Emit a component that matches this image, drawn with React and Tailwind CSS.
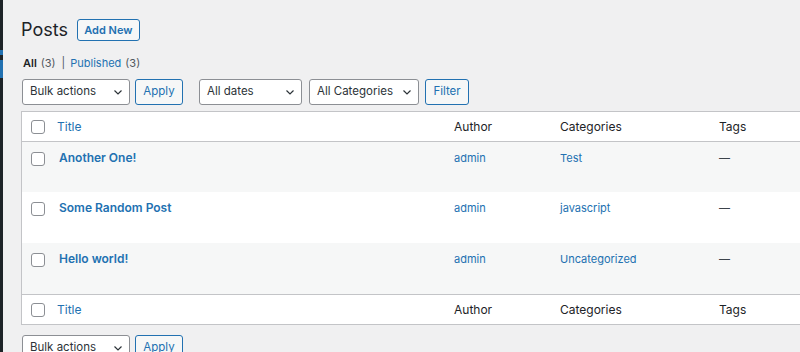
import React from 'react';

const posts = [
  { title: 'Another One!', author: 'admin', category: 'Test', alt: true, h: 'h-[50px]' },
  { title: 'Some Random Post', author: 'admin', category: 'javascript', alt: false, h: 'h-[51px]' },
  { title: 'Hello world!', author: 'admin', category: 'Uncategorized', alt: true, h: 'h-[51px]' },
];

const Checkbox = () => (
  <span className="block w-[14px] h-[14px] rounded-[3px] border border-[#8c8f94] bg-white" />
);

const Chevron = () => (
  <svg width="10" height="10" viewBox="0 0 10 10" fill="none" className="shrink-0">
    <path d="M1.5 3.5L5 7l3.5-3.5" stroke="#2c3338" strokeWidth="1.2" />
  </svg>
);

const Select = ({ label, width }) => (
  <div className={`flex items-center justify-between h-[26px] ${width} pl-[7px] pr-[6px] bg-white border border-[#8c8f94] rounded-[3px] text-[11.5px] text-[#2c3338] whitespace-nowrap`}>
    <span>{label}</span>
    <Chevron />
  </div>
);

const Button = ({ label, width }) => (
  <div className={`flex items-center justify-center h-[26px] ${width} bg-[#f6f7f7] border border-[#2271b1] rounded-[3px] text-[11.5px] text-[#2271b1]`}>
    {label}
  </div>
);

const HeadRow = ({ top }) => (
  <div className={`grid grid-cols-[27px_395px_106px_159px_1fr] h-[30px] pt-[1px] items-center bg-white text-[12px] ${top ? 'border-b border-[#c3c4c7]' : 'border-t border-[#c3c4c7]'}`}>
    <div className="pl-[9px]"><Checkbox /></div>
    <div className="pl-[8px] text-[#2271b1]">Title</div>
    <div className="pl-[10px] text-[#1d2327]">Author</div>
    <div className="pl-[10px] text-[#1d2327]">Categories</div>
    <div className="pl-[10px] text-[#1d2327]">Tags</div>
  </div>
);

const App = () => {
  return (
    <div className="flex w-[800px] h-[352px] overflow-hidden bg-[#f0f0f1]" style={{ fontFamily: 'Inter, "Noto Sans", sans-serif' }}>
      {/* admin menu edge */}
      <div className="w-[3px] shrink-0 bg-[#1d2327] flex flex-col">
        <div className="h-[50px]" />
        <div className="h-[5px] bg-[#2271b1]" />
        <div className="h-[5px]" />
        <div className="h-[18px] bg-[#2271b1]" />
      </div>

      <div className="pl-[18px] flex flex-col shrink-0">
        <div className="flex items-center gap-[9px] mt-[19px] h-[22px]">
          <h1 className="text-[18px] text-[#1d2327] leading-none">Posts</h1>
          <div className="flex items-center justify-center h-[22px] w-[63px] bg-[#f6f7f7] border border-[#2271b1] rounded-[3px] text-[11px] font-semibold text-[#2271b1]">
            Add New
          </div>
        </div>

        <div className="flex items-center h-[14px] mt-[15px] text-[11px] text-[#50575e] pl-[2px]">
          <span className="font-semibold text-[#1d2327]">All</span>
          <span className="ml-[4px]">(3)</span>
          <span className="ml-[6px] mr-[5px] text-[#50575e]">|</span>
          <span className="text-[#2271b1]">Published</span>
          <span className="ml-[4px]">(3)</span>
        </div>

        <div className="flex items-center mt-[9px] pl-[1px]">
          <Select label="Bulk actions" width="w-[108px]" />
          <div className="ml-[5px]"><Button label="Apply" width="w-[48px]" /></div>
          <div className="ml-[16px]"><Select label="All dates" width="w-[103px]" /></div>
          <div className="ml-[7px]"><Select label="All Categories" width="w-[110px]" /></div>
          <div className="ml-[6px]"><Button label="Filter" width="w-[44px]" /></div>
        </div>

        <div className="mt-[6px] w-[830px] border border-[#c3c4c7] bg-white">
          <HeadRow top />
          {posts.map((p) => (
            <div
              key={p.title}
              className={`grid grid-cols-[27px_395px_106px_159px_1fr] ${p.h} items-start pt-[9px] text-[11px] ${p.alt ? 'bg-[#f6f7f7]' : 'bg-white'}`}
            >
              <div className="pl-[9px] pt-[1px]"><Checkbox /></div>
              <div className="pl-[10px] text-[12px] font-semibold text-[#2271b1] leading-[14px]">{p.title}</div>
              <div className="pl-[10px] text-[#2271b1] leading-[14px]">{p.author}</div>
              <div className="pl-[10px] text-[#2271b1] leading-[14px]">{p.category}</div>
              <div className="pl-[10px] text-[#3c434a] leading-[14px]">—</div>
            </div>
          ))}
          <HeadRow />
        </div>

        <div className="flex items-center mt-[10px] pl-[1px]">
          <Select label="Bulk actions" width="w-[108px]" />
          <div className="ml-[5px]"><Button label="Apply" width="w-[48px]" /></div>
        </div>
      </div>
    </div>
  );
};

export default App;
